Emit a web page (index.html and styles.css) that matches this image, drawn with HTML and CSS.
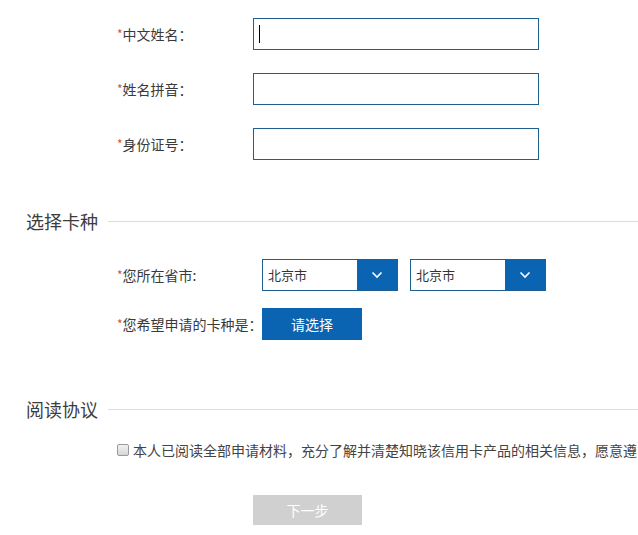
FILE: index.html
```html
<!DOCTYPE html>
<html lang="zh-CN">
<head>
<meta charset="utf-8">
<title>申请信用卡</title>
<link rel="stylesheet" href="styles.css">
</head>
<body>
<div class="page">
  <div class="basic">
    <div class="row">
      <label class="label"><span class="req">*</span>中文姓名：</label>
      <div class="field"><span class="caret"></span></div>
    </div>
    <div class="row">
      <label class="label"><span class="req">*</span>姓名拼音：</label>
      <div class="field"></div>
    </div>
    <div class="row">
      <label class="label"><span class="req">*</span>身份证号：</label>
      <div class="field"></div>
    </div>
  </div>

  <div class="section-title title-card"><span class="title-text">选择卡种</span><span class="title-line"></span></div>

  <div class="card">
    <div class="row row-select">
      <label class="label label-wide"><span class="req">*</span>您所在省市:</label>
      <div class="select">
        <span class="select-text">北京市</span>
        <span class="select-btn"><svg width="12" height="8" viewBox="0 0 12 8"><polyline points="1.5,1.5 6,6 10.5,1.5" fill="none" stroke="#fff" stroke-width="1.6"/></svg></span>
      </div>
      <div class="select">
        <span class="select-text">北京市</span>
        <span class="select-btn"><svg width="12" height="8" viewBox="0 0 12 8"><polyline points="1.5,1.5 6,6 10.5,1.5" fill="none" stroke="#fff" stroke-width="1.6"/></svg></span>
      </div>
    </div>
    <div class="row row-kind">
      <label class="label label-wide"><span class="req">*</span>您希望申请的卡种是：</label>
      <button class="btn-choose" type="button">请选择</button>
    </div>
  </div>

  <div class="section-title title-read"><span class="title-text">阅读协议</span><span class="title-line"></span></div>

  <div class="agree">
    <span class="checkbox"></span>
    <span class="agree-text">本人已阅读全部申请材料，充分了解并清楚知晓该信用卡产品的相关信息，愿意遵</span>
  </div>

  <div class="actions">
    <button class="btn-next" type="button">下一步</button>
  </div>
</div>
</body>
</html>
```

FILE: styles.css
```css
html, body {
  margin: 0;
  padding: 0;
  background: #fff;
  overflow: hidden;
}
body {
  font-family: "Noto Sans CJK SC", "Noto Sans", sans-serif;
  color: #333;
  font-size: 14px;
}
.page {
  width: 638px;
  height: 535px;
  overflow: hidden;
}
.basic {
  padding-top: 18px;
  padding-left: 117px;
  display: flex;
  flex-direction: column;
  gap: 23px;
}
.row {
  display: flex;
  align-items: center;
  height: 32px;
}
.label {
  width: 136px;
  flex: none;
  font-size: 14px;
  line-height: 20px;
  color: #3a3a3a;
  white-space: nowrap;
}
.label-wide {
  width: 145px;
}
.req {
  color: #c9573f;
  font-size: 12px;
  vertical-align: 1px;
}
.field {
  box-sizing: border-box;
  width: 286px;
  height: 32px;
  border: 1px solid #1f5f8f;
  background: #fff;
  position: relative;
}
.caret {
  position: absolute;
  left: 5px;
  top: 6px;
  width: 1px;
  height: 18px;
  background: #000;
}
.section-title {
  display: flex;
  align-items: center;
  padding-left: 26px;
  height: 24px;
}
.title-card {
  margin-top: 49px;
}
.title-read {
  margin-top: 57px;
}
.title-text {
  font-size: 18px;
  line-height: 24px;
  color: #3c3c3c;
  font-weight: 400;
  white-space: nowrap;
}
.title-line {
  flex: 1;
  height: 1px;
  margin-left: 10px;
  background: #dcdcdc;
}
.card {
  padding-left: 117px;
  padding-top: 26px;
  display: flex;
  flex-direction: column;
  gap: 17px;
}
.row-select {
  gap: 12px;
}
.row-select .label {
  margin-right: -12px;
}
.select {
  box-sizing: border-box;
  width: 136px;
  height: 32px;
  border: 1px solid #1f5f8f;
  display: flex;
  align-items: stretch;
}
.select-text {
  flex: 1;
  padding-left: 5px;
  font-size: 13px;
  line-height: 30px;
  color: #333;
}
.select-btn {
  width: 40px;
  background: #0b64b1;
  display: flex;
  align-items: center;
  justify-content: center;
}
.btn-choose {
  width: 100px;
  height: 32px;
  border: none;
  background: #0b64b1;
  color: #fff;
  font-family: inherit;
  font-size: 14px;
  padding: 0;
  cursor: pointer;
}
.agree {
  margin-top: 19px;
  padding-left: 117px;
  height: 20px;
  display: flex;
  align-items: center;
  white-space: nowrap;
}
.checkbox {
  box-sizing: border-box;
  width: 12px;
  height: 12px;
  border: 1px solid #9a9a9a;
  border-radius: 2px;
  background: linear-gradient(#f2f2f2, #d6d6d6);
  margin-right: 4px;
  flex: none;
}
.agree-text {
  font-size: 14px;
  color: #444;
  line-height: 20px;
}
.actions {
  margin-top: 35px;
  padding-left: 253px;
}
.btn-next {
  width: 109px;
  height: 30px;
  border: none;
  background: #d0d0d0;
  color: #fff;
  font-family: inherit;
  font-size: 14px;
  padding: 0;
}
```
